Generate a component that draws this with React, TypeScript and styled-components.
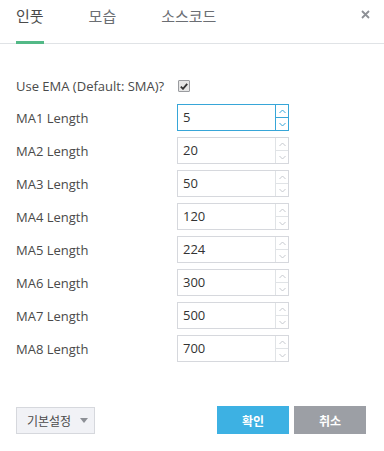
import { createGlobalStyle, styled } from "styled-components"

const GlobalStyle = createGlobalStyle`
  html, body {
    margin: 0;
    padding: 0;
    background: #fff;
  }
  body {
    font-family: "Open Sans", "Noto Sans CJK KR", sans-serif;
    color: #4a4a4a;
  }
`

const rows = [
  { label: "MA1 Length", value: "5", focused: true },
  { label: "MA2 Length", value: "20" },
  { label: "MA3 Length", value: "50" },
  { label: "MA4 Length", value: "120" },
  { label: "MA5 Length", value: "224" },
  { label: "MA6 Length", value: "300" },
  { label: "MA7 Length", value: "500" },
  { label: "MA8 Length", value: "700" },
]

const Chevron = ({ up, color }: { up?: boolean; color: string }) => (
  <svg width="7" height="5" viewBox="0 0 7 5">
    <path d={up ? "M0.5 4 L3.5 1 L6.5 4" : "M0.5 1 L3.5 4 L6.5 1"} fill="none" stroke={color} strokeWidth="1" />
  </svg>
)

const App = () => {
  return (
    <Dialog>
      <GlobalStyle />
      <Header>
        <Tabs>
          <Tab $active>인풋</Tab>
          <Tab>모습</Tab>
          <Tab>소스코드</Tab>
        </Tabs>
        <Close>
          <svg width="9" height="9" viewBox="0 0 9 9">
            <path d="M1 1 L8 8 M8 1 L1 8" stroke="#8d9096" strokeWidth="1.8" />
          </svg>
        </Close>
      </Header>
      <Content>
        <CheckRow>
          <Label>Use EMA (Default: SMA)?</Label>
          <CheckBox>
            <svg width="8" height="7" viewBox="0 0 8 7">
              <path d="M0.8 3.6 L3 5.8 L7.2 0.8" fill="none" stroke="#333" strokeWidth="1.8" />
            </svg>
          </CheckBox>
        </CheckRow>
        {rows.map((r) => (
          <Row key={r.label}>
            <Label>{r.label}</Label>
            <NumberBox $focused={r.focused}>
              <Value>{r.value}</Value>
              <Spinner $focused={r.focused}>
                <SpinButton $focused={r.focused}>
                  <Chevron up color={r.focused ? "#37a6d8" : "#c5c8ce"} />
                </SpinButton>
                <SpinButton $focused={r.focused}>
                  <Chevron color={r.focused ? "#37a6d8" : "#c5c8ce"} />
                </SpinButton>
              </Spinner>
            </NumberBox>
          </Row>
        ))}
      </Content>
      <Footer>
        <Defaults>
          기본설정
          <Caret />
        </Defaults>
        <Actions>
          <ActionButton $primary>확인</ActionButton>
          <ActionButton>취소</ActionButton>
        </Actions>
      </Footer>
    </Dialog>
  )
}

export default App

const Dialog = styled.div`
  width: 384px;
  height: 451px;
  display: flex;
  flex-direction: column;
  background: #fff;
`
const Header = styled.div`
  height: 43px;
  border-bottom: 1px solid #e0e3e6;
  display: flex;
  flex-direction: row;
  align-items: stretch;
  justify-content: space-between;
  padding: 0 14px 0 16px;
`
const Tabs = styled.div`
  display: flex;
  flex-direction: row;
  gap: 45px;
`
const Tab = styled.div<{ $active?: boolean }>`
  font-family: "Noto Sans CJK KR", sans-serif;
  font-size: 15px;
  color: ${(p) => (p.$active ? "#4a4a4a" : "#6b6e73")};
  padding-top: 5px;
  line-height: 22px;
  border-bottom: 3px solid ${(p) => (p.$active ? "#53b987" : "transparent")};
  margin-bottom: -1px;
  box-sizing: border-box;
`
const Close = styled.div`
  padding-top: 10px;
  line-height: 0;
`
const Content = styled.div`
  display: flex;
  flex-direction: column;
  padding: 32px 0 0 16px;
  gap: 6px;
  flex: 1;
`
const CheckRow = styled.div`
  display: flex;
  flex-direction: row;
  align-items: center;
  gap: 14px;
  height: 20px;
  margin-bottom: 2px;
`
const Label = styled.span`
  font-size: 13px;
  color: #4a4a4a;
`
const CheckBox = styled.span`
  width: 10px;
  height: 10px;
  border: 1px solid #9a9ca0;
  background: #e6e6e6;
  border-radius: 1px;
  display: flex;
  align-items: center;
  justify-content: center;
`
const Row = styled.div`
  display: grid;
  grid-template-columns: 161px 112px;
  align-items: center;
  height: 27px;
`
const NumberBox = styled.div<{ $focused?: boolean }>`
  height: 27px;
  box-sizing: border-box;
  border: 1px solid ${(p) => (p.$focused ? "#37a6d8" : "#d6d8dd")};
  display: flex;
  flex-direction: row;
  background: #fff;
`
const Value = styled.span`
  flex: 1;
  padding-left: 5px;
  font-size: 13px;
  line-height: 25px;
  color: #333;
`
const Spinner = styled.div<{ $focused?: boolean }>`
  width: 12px;
  border-left: 1px solid ${(p) => (p.$focused ? "#37a6d8" : "#e0e3e6")};
  display: flex;
  flex-direction: column;
`
const SpinButton = styled.div<{ $focused?: boolean }>`
  flex: 1;
  display: flex;
  align-items: center;
  justify-content: center;
  &:first-child {
    border-bottom: 1px solid ${(p) => (p.$focused ? "#37a6d8" : "#e0e3e6")};
  }
`
const Footer = styled.div`
  display: flex;
  flex-direction: row;
  justify-content: space-between;
  align-items: center;
  padding: 0 18px 17px 16px;
`
const Defaults = styled.div`
  width: 79px;
  height: 27px;
  box-sizing: border-box;
  border: 1px solid #d6d8dd;
  background: #f1f2f6;
  font-family: "Noto Sans CJK KR", sans-serif;
  font-size: 12px;
  color: #4a4a4a;
  display: flex;
  align-items: center;
  padding-left: 10px;
  gap: 9px;
`
const Caret = styled.span`
  width: 0;
  height: 0;
  border-left: 4px solid transparent;
  border-right: 4px solid transparent;
  border-top: 5px solid #8d9096;
`
const Actions = styled.div`
  display: flex;
  flex-direction: row;
  gap: 5px;
`
const ActionButton = styled.div<{ $primary?: boolean }>`
  width: 72px;
  height: 28px;
  background: ${(p) => (p.$primary ? "#3db1e3" : "#9c9fa5")};
  color: #fff;
  font-family: "Noto Sans CJK KR", sans-serif;
  font-weight: 700;
  font-size: 12px;
  display: flex;
  align-items: center;
  justify-content: center;
`
